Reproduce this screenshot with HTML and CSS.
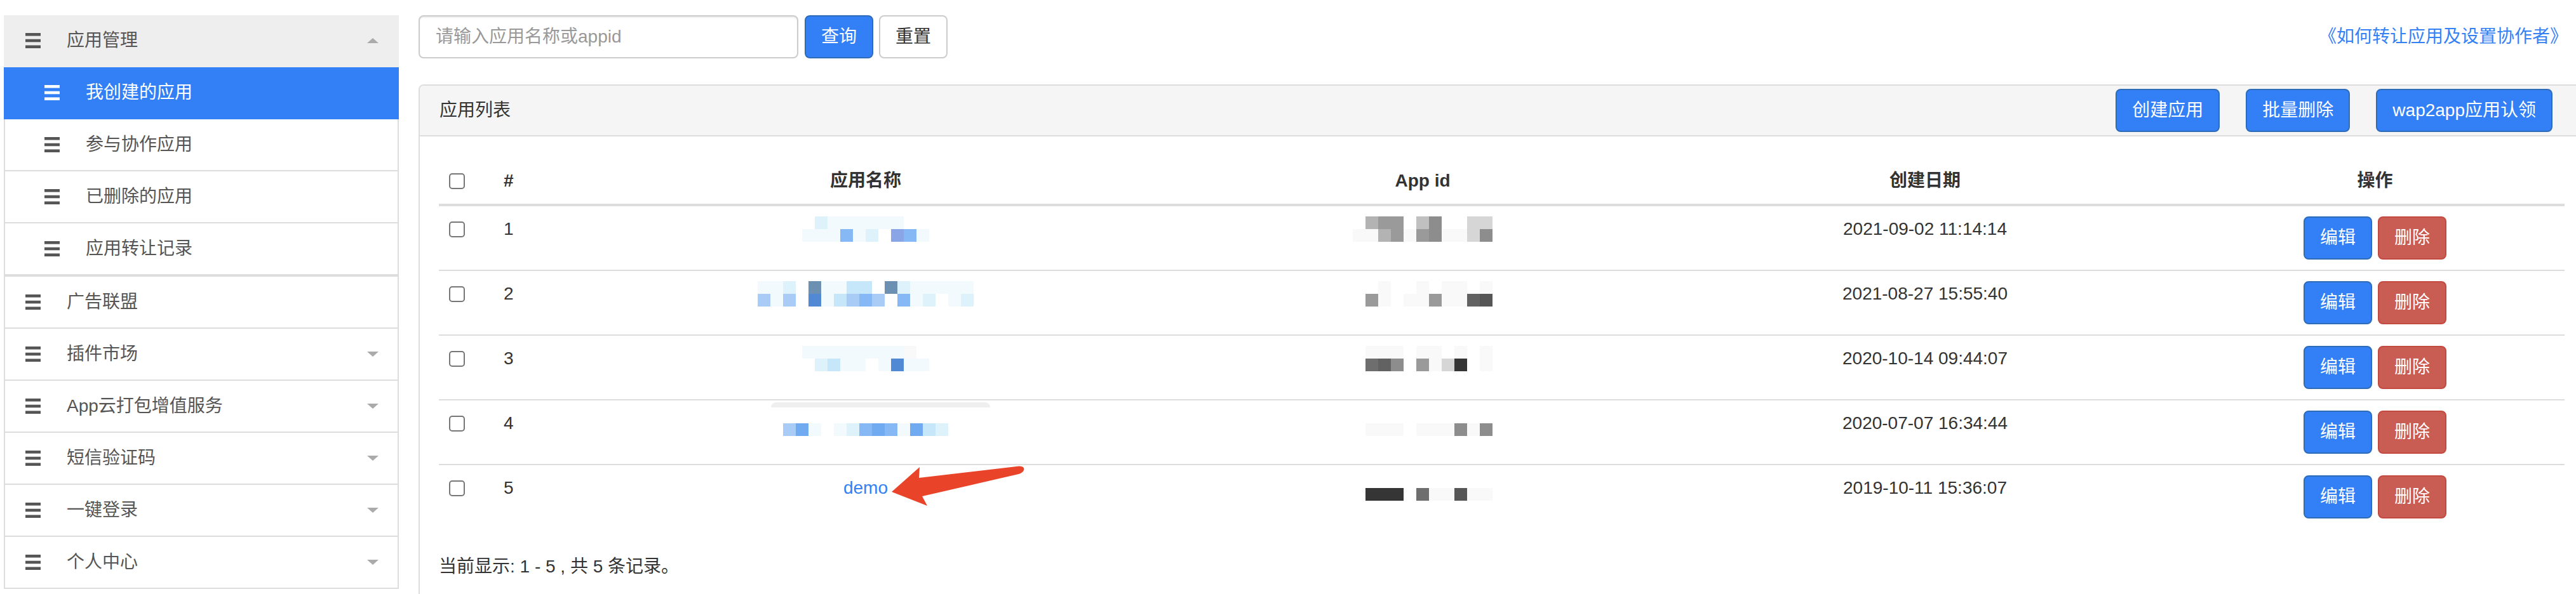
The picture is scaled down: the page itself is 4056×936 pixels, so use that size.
FILE: index.html
```html
<!DOCTYPE html>
<html lang="zh-CN">
<head>
<meta charset="utf-8">
<title>应用管理</title>
<link rel="stylesheet" href="styles.css">
</head>
<body>
<div class="page">
  <aside class="sidebar">
    <div class="menu-group">
      <div class="menu-item menu-head">
        <svg class="icon" viewBox="0 0 24 24"><rect x="0" y="0" width="24" height="4.6"/><rect x="0" y="9.7" width="24" height="4.6"/><rect x="0" y="19.4" width="24" height="4.6"/></svg>
        <span class="label">应用管理</span><span class="caret up"></span>
      </div>
      <div class="menu-item sub active">
        <svg class="icon" viewBox="0 0 24 24"><rect x="0" y="0" width="24" height="4.6"/><rect x="0" y="9.7" width="24" height="4.6"/><rect x="0" y="19.4" width="24" height="4.6"/></svg>
        <span class="label">我创建的应用</span>
      </div>
      <div class="menu-item sub">
        <svg class="icon" viewBox="0 0 24 24"><rect x="0" y="0" width="24" height="4.6"/><rect x="0" y="9.7" width="24" height="4.6"/><rect x="0" y="19.4" width="24" height="4.6"/></svg>
        <span class="label">参与协作应用</span>
      </div>
      <div class="menu-item sub">
        <svg class="icon" viewBox="0 0 24 24"><rect x="0" y="0" width="24" height="4.6"/><rect x="0" y="9.7" width="24" height="4.6"/><rect x="0" y="19.4" width="24" height="4.6"/></svg>
        <span class="label">已删除的应用</span>
      </div>
      <div class="menu-item sub">
        <svg class="icon" viewBox="0 0 24 24"><rect x="0" y="0" width="24" height="4.6"/><rect x="0" y="9.7" width="24" height="4.6"/><rect x="0" y="19.4" width="24" height="4.6"/></svg>
        <span class="label">应用转让记录</span>
      </div>
    </div>
    <div class="menu-group">
      <div class="menu-item">
        <svg class="icon" viewBox="0 0 24 24"><rect x="0" y="0" width="24" height="4.6"/><rect x="0" y="9.7" width="24" height="4.6"/><rect x="0" y="19.4" width="24" height="4.6"/></svg>
        <span class="label">广告联盟</span>
      </div>
      <div class="menu-item">
        <svg class="icon" viewBox="0 0 24 24"><rect x="0" y="0" width="24" height="4.6"/><rect x="0" y="9.7" width="24" height="4.6"/><rect x="0" y="19.4" width="24" height="4.6"/></svg>
        <span class="label">插件市场</span><span class="caret down"></span>
      </div>
      <div class="menu-item">
        <svg class="icon" viewBox="0 0 24 24"><rect x="0" y="0" width="24" height="4.6"/><rect x="0" y="9.7" width="24" height="4.6"/><rect x="0" y="19.4" width="24" height="4.6"/></svg>
        <span class="label">App云打包增值服务</span><span class="caret down"></span>
      </div>
      <div class="menu-item">
        <svg class="icon" viewBox="0 0 24 24"><rect x="0" y="0" width="24" height="4.6"/><rect x="0" y="9.7" width="24" height="4.6"/><rect x="0" y="19.4" width="24" height="4.6"/></svg>
        <span class="label">短信验证码</span><span class="caret down"></span>
      </div>
      <div class="menu-item">
        <svg class="icon" viewBox="0 0 24 24"><rect x="0" y="0" width="24" height="4.6"/><rect x="0" y="9.7" width="24" height="4.6"/><rect x="0" y="19.4" width="24" height="4.6"/></svg>
        <span class="label">一键登录</span><span class="caret down"></span>
      </div>
      <div class="menu-item">
        <svg class="icon" viewBox="0 0 24 24"><rect x="0" y="0" width="24" height="4.6"/><rect x="0" y="9.7" width="24" height="4.6"/><rect x="0" y="19.4" width="24" height="4.6"/></svg>
        <span class="label">个人中心</span><span class="caret down"></span>
      </div>
    </div>
  </aside>

  <main class="main">
    <div class="toolbar">
      <input class="search" type="text" placeholder="请输入应用名称或appid">
      <button class="btn btn-primary btn-query">查询</button>
      <button class="btn btn-default">重置</button>
      <a class="help-link" href="#">《如何转让应用及设置协作者》</a>
    </div>

    <section class="panel">
      <div class="panel-heading">
        <span class="panel-title">应用列表</span>
        <div class="heading-actions">
          <button class="btn btn-primary">创建应用</button>
          <button class="btn btn-primary">批量删除</button>
          <button class="btn btn-primary">wap2app应用认领</button>
        </div>
      </div>
      <div class="panel-body">
        <table class="table">
          <colgroup>
            <col class="c-check"><col class="c-num"><col class="c-name"><col class="c-id"><col class="c-date"><col class="c-ops">
          </colgroup>
          <thead>
            <tr>
              <th><input class="chk" type="checkbox"></th>
              <th>#</th>
              <th class="center">应用名称</th>
              <th class="center">App id</th>
              <th class="center">创建日期</th>
              <th class="center">操作</th>
            </tr>
          </thead>
          <tbody>
            <tr>
              <td><input class="chk" type="checkbox"></td>
              <td>1</td>
              <td class="center"><span class="mosaic"><i class="p0"></i><i class="p1"></i><i class="p2"></i><i class="p1"></i><i class="p1"></i><i class="p1"></i><i class="p1"></i><i class="p5"></i><i class="p1"></i><i class="p1"></i><i class="p1"></i><i class="p2"></i><i class="p1"></i><i class="p0"></i><i class="p1"></i><i class="p9"></i><i class="p0"></i><i class="p5"></i><i class="p0"></i><i class="p1"></i></span></td>
              <td class="center"><span class="mosaic"><i class="p0"></i><i class="g1"></i><i class="g3"></i><i class="g1"></i><i class="g4"></i><i class="g3"></i><i class="g4"></i><i class="g4"></i><i class="p0"></i><i class="g1"></i><i class="g9"></i><i class="g4"></i><i class="g5"></i><i class="g5"></i><i class="p0"></i><i class="g1"></i><i class="p0"></i><i class="g1"></i><i class="g2"></i><i class="g2"></i><i class="g2"></i><i class="g5"></i></span></td>
              <td class="center">2021-09-02 11:14:14</td>
              <td><div class="ops"><button class="btn btn-primary">编辑</button><button class="btn btn-danger">删除</button></div></td>
            </tr>
            <tr>
              <td><input class="chk" type="checkbox"></td>
              <td>2</td>
              <td class="center"><span class="mosaic"><i class="p1"></i><i class="p4"></i><i class="p1"></i><i class="p1"></i><i class="p2"></i><i class="p4"></i><i class="p0"></i><i class="p0"></i><i class="p8"></i><i class="p7"></i><i class="p1"></i><i class="p1"></i><i class="p1"></i><i class="p3"></i><i class="p3"></i><i class="p4"></i><i class="p3"></i><i class="p5"></i><i class="p0"></i><i class="p4"></i><i class="p8"></i><i class="p0"></i><i class="p2"></i><i class="p5"></i><i class="p1"></i><i class="p1"></i><i class="p1"></i><i class="p2"></i><i class="p1"></i><i class="p0"></i><i class="p1"></i><i class="p1"></i><i class="p1"></i><i class="p2"></i></span></td>
              <td class="center"><span class="mosaic"><i class="p0"></i><i class="p0"></i><i class="p0"></i><i class="g4"></i><i class="g1"></i><i class="g1"></i><i class="p0"></i><i class="p0"></i><i class="p0"></i><i class="g1"></i><i class="g1"></i><i class="g1"></i><i class="p0"></i><i class="g4"></i><i class="g1"></i><i class="g1"></i><i class="g1"></i><i class="g1"></i><i class="p0"></i><i class="g10"></i><i class="g1"></i><i class="g7"></i></span></td>
              <td class="center">2021-08-27 15:55:40</td>
              <td><div class="ops"><button class="btn btn-primary">编辑</button><button class="btn btn-danger">删除</button></div></td>
            </tr>
            <tr>
              <td><input class="chk" type="checkbox"></td>
              <td>3</td>
              <td class="center"><span class="mosaic"><i class="p1"></i><i class="p0"></i><i class="p1"></i><i class="p2"></i><i class="p1"></i><i class="p3"></i><i class="p1"></i><i class="p1"></i><i class="p1"></i><i class="p1"></i><i class="p1"></i><i class="p0"></i><i class="p1"></i><i class="p1"></i><i class="p1"></i><i class="p7"></i><i class="g1"></i><i class="p1"></i><i class="p0"></i><i class="p1"></i></span></td>
              <td class="center"><span class="mosaic"><i class="p0"></i><i class="p0"></i><i class="g1"></i><i class="g6"></i><i class="g1"></i><i class="g10"></i><i class="g1"></i><i class="g5"></i><i class="p0"></i><i class="p0"></i><i class="g1"></i><i class="g4"></i><i class="g1"></i><i class="g1"></i><i class="p0"></i><i class="g2"></i><i class="g1"></i><i class="g8"></i><i class="p0"></i><i class="p0"></i><i class="g1"></i><i class="g1"></i></span></td>
              <td class="center">2020-10-14 09:44:07</td>
              <td><div class="ops"><button class="btn btn-primary">编辑</button><button class="btn btn-danger">删除</button></div></td>
            </tr>
            <tr>
              <td><input class="chk" type="checkbox"></td>
              <td>4</td>
              <td class="center"><div class="name-wrap"><span class="ghost"></span><span class="mosaic"><i class="p0"></i><i class="p4"></i><i class="p0"></i><i class="p6"></i><i class="p0"></i><i class="p1"></i><i class="p0"></i><i class="p0"></i><i class="p0"></i><i class="p1"></i><i class="p0"></i><i class="p2"></i><i class="p0"></i><i class="p5"></i><i class="p0"></i><i class="p6"></i><i class="p0"></i><i class="p5"></i><i class="p0"></i><i class="p1"></i><i class="p0"></i><i class="p6"></i><i class="p0"></i><i class="p3"></i><i class="p0"></i><i class="p2"></i></span></div></td>
              <td class="center"><span class="mosaic"><i class="p0"></i><i class="p0"></i><i class="p0"></i><i class="g1"></i><i class="p0"></i><i class="g1"></i><i class="p0"></i><i class="g1"></i><i class="p0"></i><i class="p0"></i><i class="p0"></i><i class="g1"></i><i class="p0"></i><i class="g1"></i><i class="p0"></i><i class="g1"></i><i class="p0"></i><i class="g5"></i><i class="p0"></i><i class="g1"></i><i class="p0"></i><i class="g5"></i></span></td>
              <td class="center">2020-07-07 16:34:44</td>
              <td><div class="ops"><button class="btn btn-primary">编辑</button><button class="btn btn-danger">删除</button></div></td>
            </tr>
            <tr>
              <td><input class="chk" type="checkbox"></td>
              <td>5</td>
              <td class="center"><a class="name-link" href="#">demo</a></td>
              <td class="center"><span class="mosaic"><i class="p0"></i><i class="p0"></i><i class="p0"></i><i class="g8"></i><i class="p0"></i><i class="g8"></i><i class="p0"></i><i class="g8"></i><i class="p0"></i><i class="p0"></i><i class="p0"></i><i class="g6"></i><i class="p0"></i><i class="g1"></i><i class="p0"></i><i class="g1"></i><i class="p0"></i><i class="g7"></i><i class="p0"></i><i class="g1"></i><i class="p0"></i><i class="g1"></i></span></td>
              <td class="center">2019-10-11 15:36:07</td>
              <td><div class="ops"><button class="btn btn-primary">编辑</button><button class="btn btn-danger">删除</button></div></td>
            </tr>
          </tbody>
        </table>
        <p class="summary">当前显示: 1 - 5 , 共 5 条记录。</p>
      </div>
    </section>
  </main>

  <svg class="arrow" viewBox="0 0 225 80" width="225" height="80">
    <path d="M9 50 L53 11 L52 28 L210 9.5 Q219 10 217 16 Q215 20 209 22 L57 57 L65 72 Z"/>
  </svg>
</div>
</body>
</html>
```

FILE: styles.css
```css
html, body {
  margin: 0;
  padding: 0;
}

body {
  width: 4056px;
  height: 936px;
  overflow: hidden;
  background: #fff;
  color: #333;
  font-family: "Liberation Sans", "Noto Sans CJK SC", sans-serif;
  font-size: 28px;
  line-height: 40px;
}

.page {
  position: relative;
  display: flex;
  align-items: flex-start;
  padding-top: 24px;
}

/* ---------- sidebar ---------- */
.sidebar {
  flex: none;
  width: 622px;
  margin-left: 6px;
}

.menu-group + .menu-group {
  border-top: 2px solid #ddd;
}

.menu-item {
  box-sizing: border-box;
  display: flex;
  align-items: center;
  height: 82px;
  padding-left: 32px;
  border: 2px solid #ddd;
  border-top: 0;
  background: #fff;
  color: #555;
}

.menu-item .icon {
  flex: none;
  width: 24px;
  height: 24px;
  margin-right: 41px;
  fill: #555;
}

.menu-head {
  background: #eee;
  border-color: #eee;
}

.menu-item.sub {
  padding-left: 62px;
}

.menu-item.active {
  background: #3380f6;
  border-color: #3380f6;
  color: #fff;
}

.menu-item.active .icon {
  fill: #fff;
}

.caret {
  margin-left: auto;
  margin-right: 30px;
  width: 0;
  height: 0;
  border-left: 9px solid transparent;
  border-right: 9px solid transparent;
}

.caret.down {
  border-top: 8px solid #aaa;
}

.caret.up {
  border-bottom: 8px solid #aaa;
}

/* ---------- main ---------- */
.main {
  flex: none;
  width: 3411px;
  margin-left: 31px;
}

.toolbar {
  display: flex;
  align-items: center;
  height: 68px;
}

.search {
  box-sizing: border-box;
  width: 598px;
  height: 68px;
  margin: 0 10px 0 0;
  padding: 0 25px;
  border: 2px solid #ccc;
  border-radius: 8px;
  box-shadow: inset 0 2px 2px rgba(0, 0, 0, 0.075);
  font-family: inherit;
  font-size: 28px;
  color: #555;
  outline: none;
}

.search::placeholder {
  color: #999;
}

.btn {
  box-sizing: border-box;
  height: 68px;
  margin: 0;
  padding: 12px 24px;
  border: 2px solid transparent;
  border-radius: 8px;
  font-family: inherit;
  font-size: 28px;
  line-height: 40px;
  white-space: nowrap;
  cursor: pointer;
}

.btn-primary {
  background: #3380f6;
  border-color: #2f6cb8;
  color: #fff;
}

.btn-danger {
  background: #c95c53;
  border-color: #c24a40;
  color: #fff;
}

.btn-default {
  background: #fff;
  border-color: #ccc;
  color: #333;
}

.btn-query {
  margin-right: 9px;
}

.help-link {
  margin-left: auto;
  margin-right: 27px;
  color: #3381f4;
  text-decoration: none;
}

/* ---------- panel ---------- */
.panel {
  margin-top: 41px;
  border: 2px solid #ddd;
  border-radius: 8px;
  background: #fff;
}

.panel-heading {
  display: flex;
  align-items: center;
  height: 78px;
  padding: 0 49px 0 31px;
  background: #f5f5f5;
  border-bottom: 2px solid #ddd;
  border-radius: 6px 6px 0 0;
}

.panel-title {
  color: #333;
}

.heading-actions {
  display: flex;
  gap: 41px;
  margin-left: auto;
}

.panel-body {
  padding: 34px 30px 30px;
}

/* ---------- table ---------- */
.table {
  width: 100%;
  table-layout: fixed;
  border-collapse: collapse;
  margin-bottom: 40px;
}

.c-check { width: 86px; }
.c-num { width: 90px; }
.c-name { width: 992px; }
.c-id { width: 762px; }
.c-date { width: 820px; }
.c-ops { width: 597px; }

.table th,
.table td {
  padding: 16px;
  text-align: left;
  vertical-align: top;
  line-height: 40px;
}

.table th {
  font-weight: bold;
  border-bottom: 4px solid #ddd;
}

.table tbody tr + tr td {
  border-top: 2px solid #ddd;
}

.table .center {
  text-align: center;
}

.chk {
  -webkit-appearance: none;
  appearance: none;
  display: block;
  box-sizing: border-box;
  width: 25px;
  height: 25px;
  margin: 8px 0 0;
  border: 2px solid #767676;
  border-radius: 5px;
  background: #fff;
}

.mosaic {
  display: inline-grid;
  grid-template-rows: 20px 20px;
  grid-auto-flow: column;
  grid-auto-columns: 20px;
  vertical-align: top;
}

.mosaic i {
  display: block;
}

.p0 { background: transparent; }
.p1 { background: #f3fafe; }
.p2 { background: #def2fc; }
.p3 { background: #c6e6fa; }
.p4 { background: #a9ccf6; }
.p5 { background: #86b8f5; }
.p6 { background: #70aaf0; }
.p7 { background: #5289d4; }
.p8 { background: #6c90b1; }
.p9 { background: #89a5e5; }
.g1 { background: #f9f9f9; }
.g2 { background: #d6d6d6; }
.g3 { background: #b3b3b3; }
.g4 { background: #9a9a9a; }
.g5 { background: #8d8d8d; }
.g6 { background: #6e6e6e; }
.g7 { background: #565656; }
.g8 { background: #353535; }
.g9 { background: #c0c0c0; }
.g10 { background: #626262; }

.name-wrap {
  position: relative;
}

.ghost {
  position: absolute;
  left: 331px;
  top: -13px;
  width: 345px;
  height: 8px;
  background: #efefef;
  border-radius: 12px 12px 0 0;
}

.name-link {
  color: #3381f4;
  text-decoration: none;
}

.ops {
  display: flex;
  justify-content: center;
  gap: 9px;
}

.summary {
  margin: 0;
  color: #333;
}

/* ---------- annotation arrow ---------- */
.arrow {
  position: absolute;
  left: 1395px;
  top: 725px;
  fill: #e9432a;
}
```
